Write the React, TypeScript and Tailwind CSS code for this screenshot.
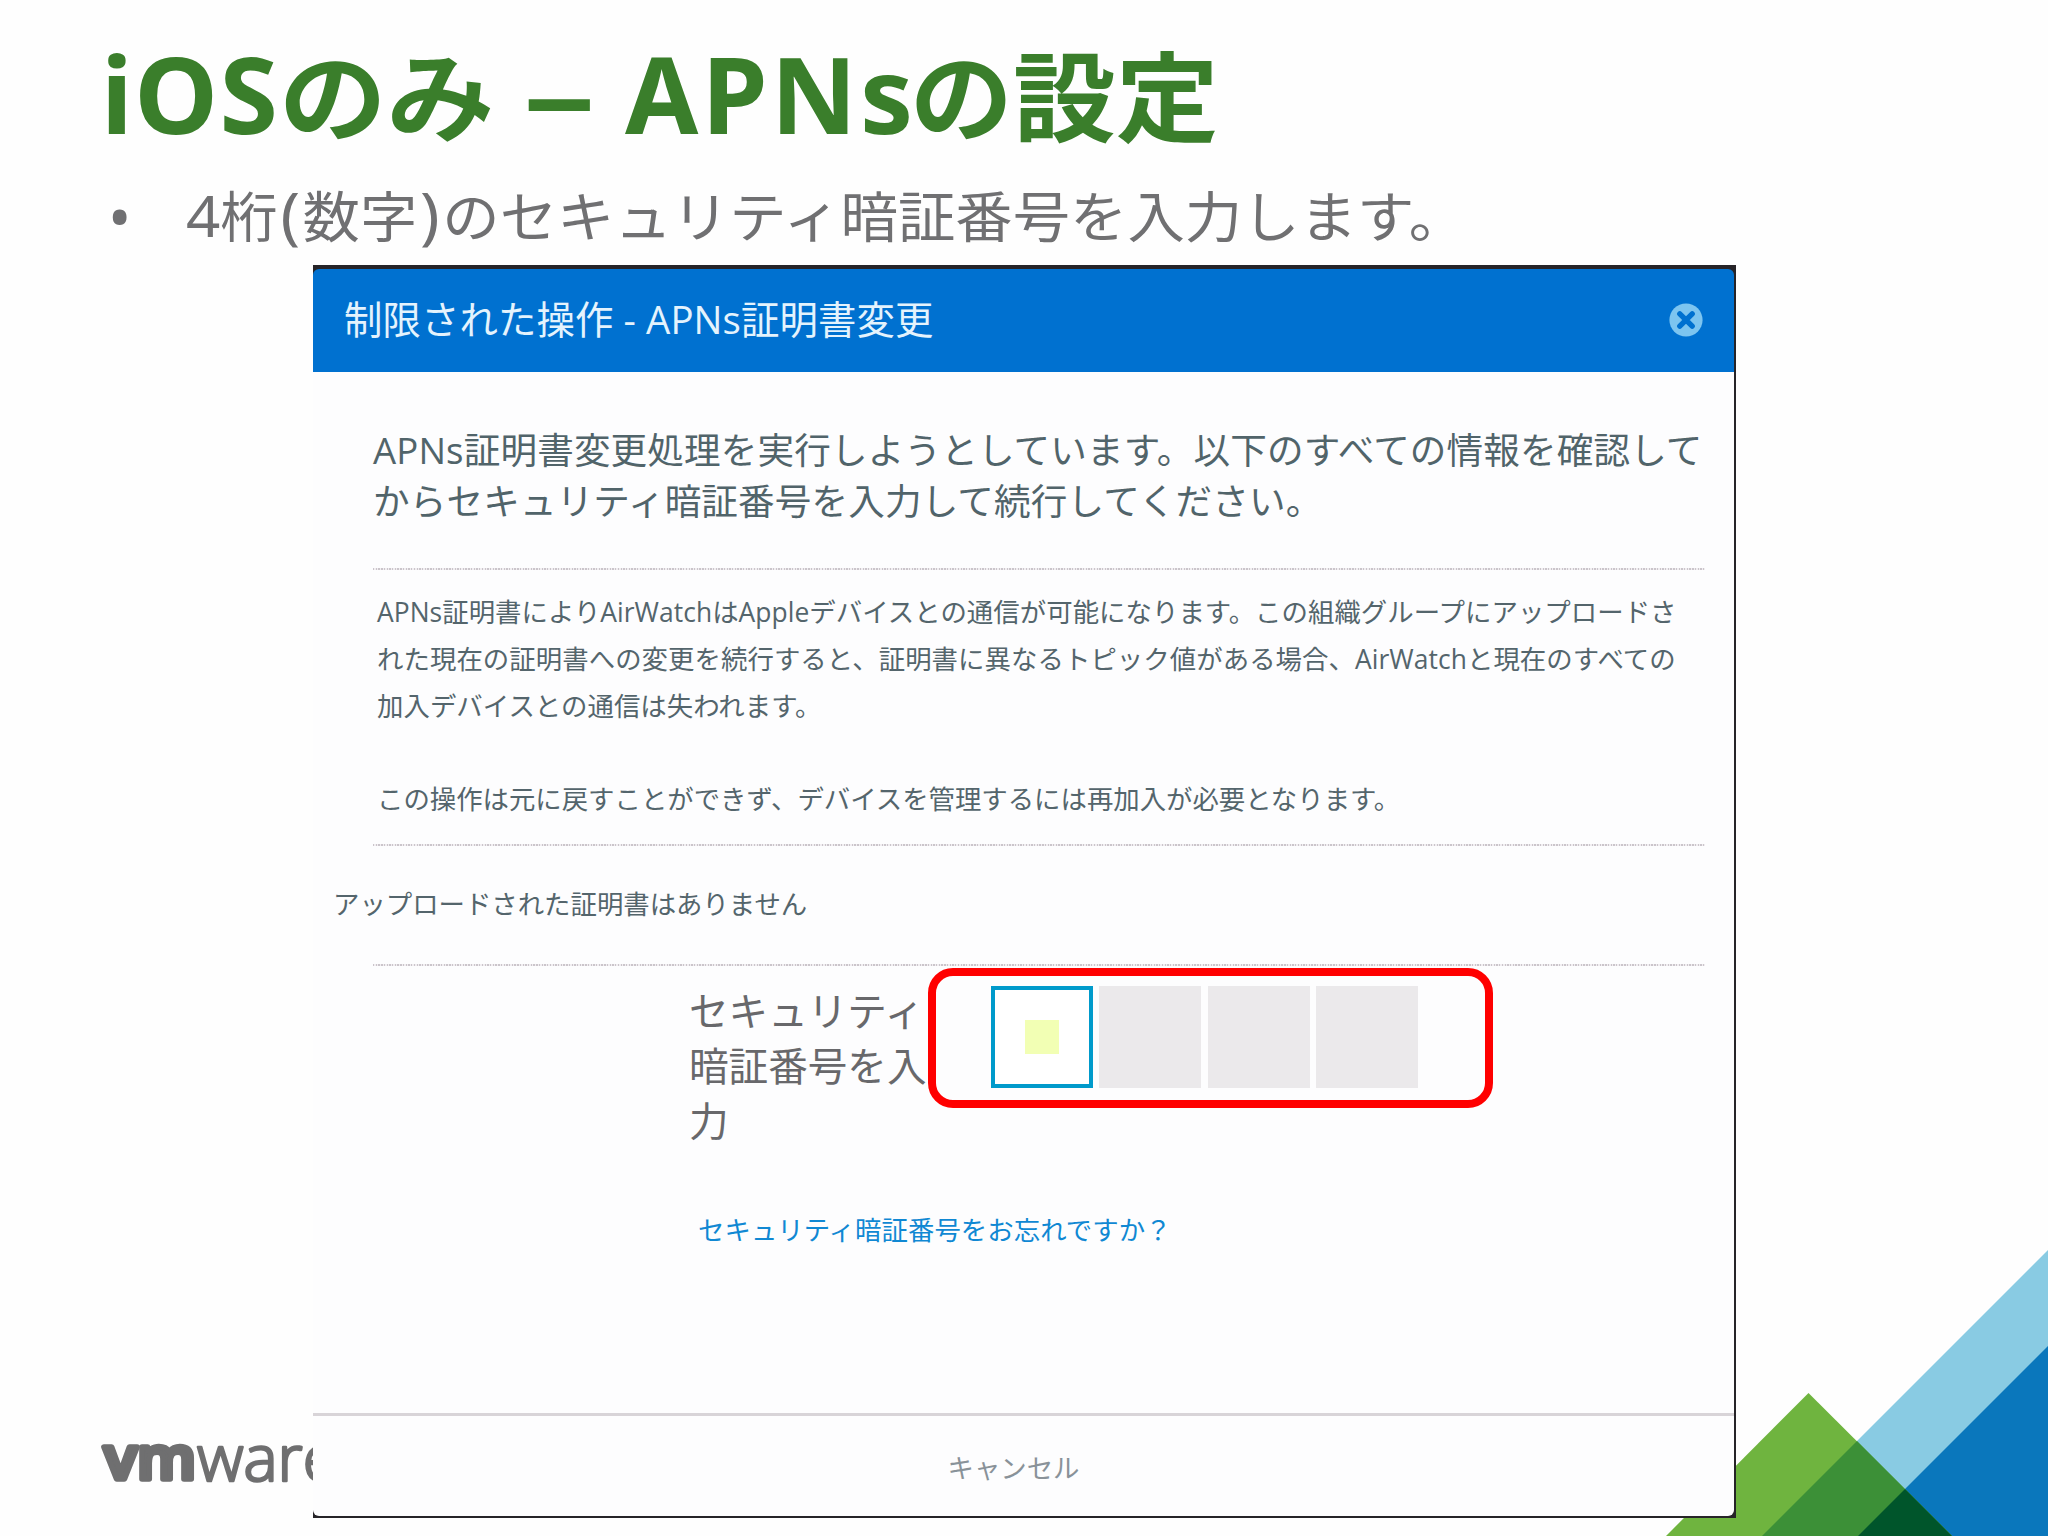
import type { ReactNode } from "react";

const DIALOG_FONT = "font-['Open_Sans','Noto_Sans_CJK_JP',sans-serif]";

const BODY_LINES = [
  { text: "APNs証明書によりAirWatchはAppleデバイスとの通信が可能になります。この組織グループにアップロードさ", track: "tracking-[0.05px]" },
  { text: "れた現在の証明書への変更を続行すると、証明書に異なるトピック値がある場合、AirWatchと現在のすべての", track: "tracking-[0.07px]" },
  { text: "加入デバイスとの通信は失われます。", track: "tracking-[0.05px]" },
];

function Latin({ children }: { children: ReactNode }) {
  return <span className="font-['Noto_Sans',sans-serif] text-[106px] tracking-[1.5px]">{children}</span>;
}

function Paren({ children }: { children: ReactNode }) {
  return <span className="px-[2.5px] text-[62px] leading-none">{children}</span>;
}

function DottedRule() {
  return (
    <div className="mr-[29px] ml-[60px] h-[2px] bg-[repeating-linear-gradient(90deg,#cbc5cb_0_1.4px,#f1eef1_1.4px_2.72px)]" />
  );
}

function CloseIcon() {
  return (
    <svg width="34" height="34" viewBox="0 0 34 34">
      <circle cx="17" cy="17" r="16.6" fill="#7dc5f0" />
      <path d="M10.8 10.8L23.2 23.2M23.2 10.8L10.8 23.2" stroke="#0071d0" strokeWidth="5.4" strokeLinecap="round" />
    </svg>
  );
}

function Mountains() {
  return (
    <svg className="absolute right-0 bottom-0" width="388" height="296" viewBox="1660 1240 388 296">
      <polygon points="2048,1250 2048,1536 1762,1536" fill="#89cbe3" />
      <polygon points="2048,1346 2048,1536 1858,1536" fill="#0a77bc" />
      <polygon points="1808.5,1393 1952,1536 1666,1536" fill="#6fb43f" />
      <polygon points="1857,1441 1952,1536 1762,1536" fill="#3c9037" />
      <polygon points="1905,1489 1952,1536 1858,1536" fill="#00552b" />
    </svg>
  );
}

function Logo() {
  return (
    <svg className="absolute bottom-[16px] left-[96px]" width="260" height="110" viewBox="0 0 260 110" fill="#6f6f70" stroke="#6f6f70" strokeLinejoin="round">
      <text x="8" y="69" fontFamily="Open Sans" fontWeight="600" fontSize="59" strokeWidth="5.5" textLength="92" lengthAdjust="spacingAndGlyphs">vm</text>
      <text x="101" y="71" fontFamily="Open Sans" fontWeight="300" fontSize="65" strokeWidth="2.6" textLength="141" lengthAdjust="spacingAndGlyphs">ware</text>
    </svg>
  );
}

function PinCells() {
  return (
    <div className="flex h-[140px] w-[565px] shrink-0 rounded-[25px] border-[8.5px] border-[#ff0000] pt-[10px] pl-[55px]">
      <div className="mr-[6px] flex h-[102px] w-[102px] items-center justify-center border-4 border-[#009acb] bg-white">
        <div className="h-[34px] w-[34px] bg-[#f2ffb4]" />
      </div>
      <div className="mr-[7px] h-[102px] w-[102px] bg-[#ebe9eb]" />
      <div className="mr-[6px] h-[102px] w-[102px] bg-[#ebe9eb]" />
      <div className="h-[102px] w-[102px] bg-[#ebe9eb]" />
    </div>
  );
}

function Dialog() {
  return (
    <section className={`relative ml-[313px] flex h-[1253px] w-[1423px] flex-col border-t-4 border-r-2 border-b-2 border-[#262428] bg-[#262428] ${DIALOG_FONT}`}>
      <header className="flex h-[103px] shrink-0 items-center justify-between rounded-t-[6px] bg-[#0071d0] pr-[31px] pb-[2px] pl-[31px] text-[38.4px] tracking-[0.1px] text-[#e4f3fd]">
        <h2>制限された操作 - APNs証明書変更</h2>
        <CloseIcon />
      </header>
      <div className="flex grow flex-col rounded-b-[6px] bg-[#fdfdfe] text-[#54656c]">
        <div className="mt-[53px] ml-[60px] h-[143px] text-[36.6px] leading-[51px] tracking-[0.15px] whitespace-nowrap text-[#51646a]">
          <p>APNs証明書変更処理を実行しようとしています。以下のすべての情報を確認して</p>
          <p>からセキュリティ暗証番号を入力して続行してください。</p>
        </div>
        <DottedRule />
        <div className="ml-[64px] h-[274px] pt-[19px] text-[26.4px] leading-[46.8px] whitespace-nowrap">
          {BODY_LINES.map((line) => (
            <p key={line.text} className={line.track}>{line.text}</p>
          ))}
          <p className="mt-[46.8px]">この操作は元に戻すことができず、デバイスを管理するには再加入が必要となります。</p>
        </div>
        <DottedRule />
        <p className="ml-[20px] h-[118px] text-[26.4px] leading-[117px]">アップロードされた証明書はありません</p>
        <DottedRule />
        <div className="flex h-[204px] pt-[2px] pl-[376px]">
          <p className="w-[239px] shrink-0 pt-[16px] text-[39.6px] leading-[55px] break-all text-[#68686b]">
            セキュリティ暗証番号を入力
          </p>
          <PinCells />
        </div>
        <a className="mt-[36px] ml-[385px] text-[26.4px] leading-[48px] tracking-[0.05px] text-[#1088d3]">セキュリティ暗証番号をお忘れですか？</a>
        <footer className="mt-auto flex h-[103px] items-center justify-center border-t-[3px] border-[#d8d4d8] pt-[6px] pr-[20px] text-[26.4px] text-[#899299]">
          キャンセル
        </footer>
      </div>
    </section>
  );
}

export default function App() {
  return (
    <main className="relative h-[1536px] w-[2048px] overflow-hidden bg-[#fefefe] font-['Noto_Sans','Noto_Sans_CJK_JP',sans-serif]">
      <Mountains />
      <Logo />
      <h1 className="h-[180px] pl-[101px] font-['Noto_Sans_CJK_JP',sans-serif] text-[98px] leading-[182px] font-bold whitespace-nowrap text-[#3a7e2b]">
        <Latin>iOS</Latin>
        <span className="mr-[19px] inline-block origin-left scale-x-[1.1]">のみ</span>
        <Latin> <span className="mx-[9px] inline-block scale-x-[1.36]">–</span> <span className="tracking-[3.2px]">APNs</span></Latin>
        <span className="-ml-[6px] inline-block origin-left scale-x-[1.05]">の設定</span>
      </h1>
      <div className="flex h-[85px] pl-[108px] text-[54.5px] leading-[73px] whitespace-nowrap text-[#707072]">
        <span className="w-[78px] text-[62px]">•</span>
        <p className="origin-left scale-x-[1.053]">
          <span className="text-[57px] leading-none">4</span>桁<Paren>(</Paren>数字<Paren>)</Paren>のセキュリティ暗証番号を入力します。
        </p>
      </div>
      <Dialog />
    </main>
  );
}
